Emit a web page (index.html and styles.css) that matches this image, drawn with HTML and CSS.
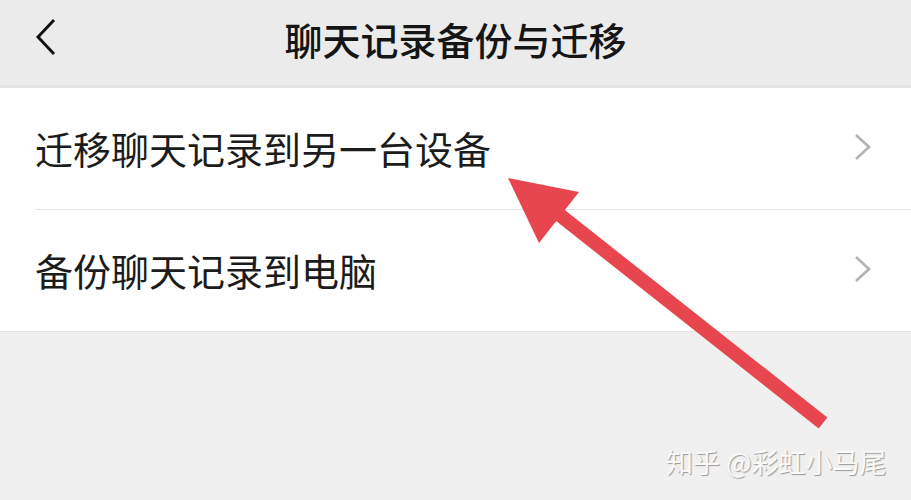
FILE: index.html
```html
<!DOCTYPE html>
<html lang="zh-CN">

<head>
    <meta charset="UTF-8" />
    <meta name="viewport" content="width=device-width, initial-scale=1.0" />
    <title>聊天记录备份与迁移</title>
    <link rel="stylesheet" href="styles.css">
</head>

<body>
    <div class="header">
        <svg class="back" width="24" height="40" viewBox="0 0 24 40">
            <polyline points="18,2 2,19 18,36" fill="none" stroke="#111" stroke-width="3" />
        </svg>
        <h1 class="title">聊天记录备份与迁移</h1>
    </div>

    <div class="list">
        <div class="row">
            <span class="label">迁移聊天记录到另一台设备</span>
            <svg class="more" width="20" height="30" viewBox="0 0 20 30">
                <polyline points="3,2 16,14 3,26" fill="none" stroke="#b4b4b4" stroke-width="2.6" />
            </svg>
        </div>
        <div class="row">
            <span class="label">备份聊天记录到电脑</span>
            <svg class="more" width="20" height="30" viewBox="0 0 20 30">
                <polyline points="3,2 16,14 3,26" fill="none" stroke="#b4b4b4" stroke-width="2.6" />
            </svg>
        </div>
    </div>

    <svg class="arrow" width="911" height="500" viewBox="0 0 911 500">
        <line x1="823" y1="423" x2="556" y2="212" stroke="#e8464e" stroke-width="14" />
        <polygon points="508,178 579,192 539,243" fill="#e8464e" />
    </svg>

    <div class="mark">知乎 @彩虹小马尾</div>
</body>

</html>
```

FILE: styles.css
```css
body {
    margin: 0;
    width: 911px;
    height: 500px;
    overflow: hidden;
    background-color: #f0f0f0;
    font-family: "Noto Sans CJK SC", "Noto Sans", sans-serif;
    color: #1a1a1a;
}

.header {
    height: 85px;
    background-color: #ebebeb;
    border-bottom: 3px solid #e3e3e3;
    display: flex;
    align-items: center;
    justify-content: center;
}

.back {
    position: absolute;
    left: 36px;
    top: 18px;
}

.title {
    margin: 0 0 9px 0;
    font-size: 38px;
    font-weight: 500;
    color: #151515;
}

.list {
    background-color: #fff;
    padding-left: 35px;
    border-bottom: 1px solid #e2e2e2;
}

.row {
    height: 121px;
    display: flex;
    align-items: center;
    justify-content: space-between;
    padding-right: 38px;
}

.row + .row {
    border-top: 1px solid #e4e4e4;
}

.label {
    font-size: 38px;
    line-height: 1;
    margin-top: -2px;
    color: #1c1c1c;
}

.more {
    margin-top: -2px;
}

.arrow {
    position: absolute;
    left: 0;
    top: 0;
}

.mark {
    position: absolute;
    left: 666px;
    top: 442px;
    font-size: 27px;
    color: #fafafa;
    text-shadow: 1px 1px 1px #9a9a9a;
}
```
